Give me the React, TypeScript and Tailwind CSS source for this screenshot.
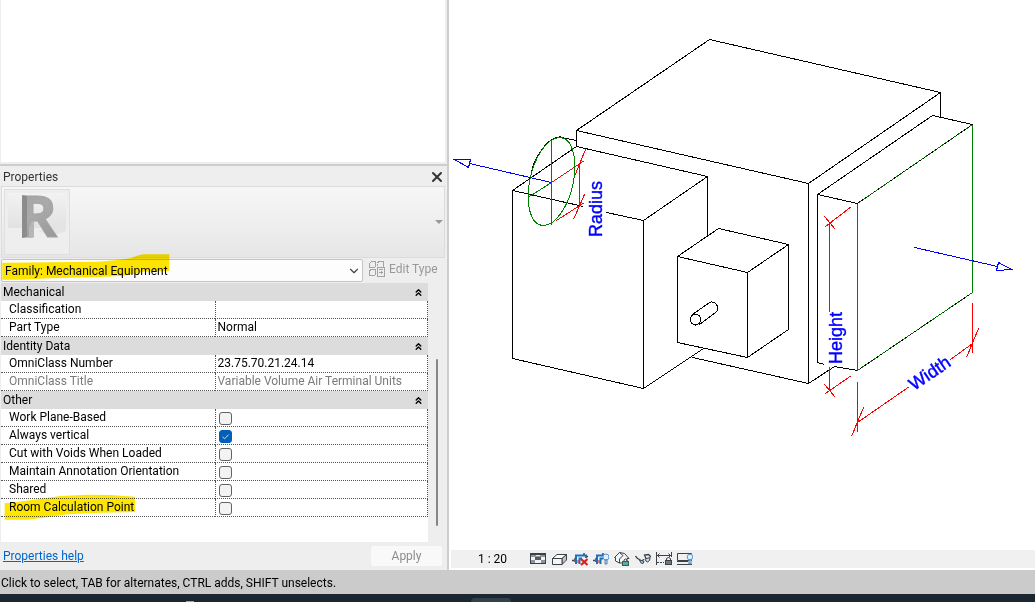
import { useState } from "react"
import { X, ChevronDown, ChevronsUp } from "lucide-react"

interface Param {
  name: string
  value?: string
  readOnly?: boolean
  checked?: boolean
  marked?: boolean
}

interface Group {
  title: string
  params: Param[]
}

const groups: Group[] = [
  {
    title: "Mechanical",
    params: [
      { name: "Classification", value: "" },
      { name: "Part Type", value: "Normal" },
    ],
  },
  {
    title: "Identity Data",
    params: [
      { name: "OmniClass Number", value: "23.75.70.21.24.14" },
      { name: "OmniClass Title", value: "Variable Volume Air Terminal Units", readOnly: true },
    ],
  },
  {
    title: "Other",
    params: [
      { name: "Work Plane-Based", checked: false },
      { name: "Always vertical", checked: true },
      { name: "Cut with Voids When Loaded", checked: false },
      { name: "Maintain Annotation Orientation", checked: false },
      { name: "Shared", checked: false },
      { name: "Room Calculation Point", checked: false, marked: true },
    ],
  },
]

function ParamCheckbox({ id, initial }: { id: string; initial: boolean }) {
  const [on, setOn] = useState(initial)
  return (
    <span className="relative block size-[13px]">
      <input
        id={id}
        type="checkbox"
        checked={on}
        onChange={(e) => setOn(e.target.checked)}
        className="block size-[13px] appearance-none rounded-[3px] border border-[#626262] bg-[#f3f3f3] checked:border-[#005fb8] checked:bg-[#005fb8]"
      />
      {on && (
        <svg viewBox="0 0 13 13" className="pointer-events-none absolute inset-0 size-[13px]" fill="none" stroke="#cfe2f4">
          <path d="M3.5 6.8 5.6 8.8 9.6 4.6" />
        </svg>
      )}
    </span>
  )
}

function ParamTable() {
  return (
    <table className="w-full table-fixed border-separate border-spacing-0 text-left">
      <colgroup>
        <col className="w-1/2" />
        <col className="w-1/2" />
      </colgroup>
      {groups.map((g) => (
        <tbody key={g.title}>
          <tr className="h-[18px] bg-[#dcdcdc]">
            <th colSpan={2} className="p-0 font-normal">
              <div className="flex h-[18px] items-center justify-between pr-1 pl-[2px]">
                {g.title}
                <button type="button" aria-label={`Collapse ${g.title}`}>
                  <ChevronsUp size={11} strokeWidth={3} />
                </button>
              </div>
            </th>
          </tr>
          {g.params.map((p) => {
            const id = p.name.toLowerCase().replace(/\s/g, "-")
            return (
              <tr key={p.name} className={p.readOnly ? "h-[18px] text-[#7a7a7a]" : "h-[18px]"}>
                <th className="border-b border-dotted border-[#555] p-0 font-normal">
                  <label htmlFor={id} className="relative block h-[17px] pl-2 leading-4 whitespace-nowrap">
                    {p.name}
                    {p.marked && <RowMarker />}
                  </label>
                </th>
                <td className="border-r border-b border-l border-dotted border-[#555] p-0">
                  {p.value === undefined ? (
                    <div className="h-[17px] pt-[3px] pl-[3px]">
                      <ParamCheckbox id={id} initial={!!p.checked} />
                    </div>
                  ) : (
                    <div className="h-[17px] pl-[2px]">
                      <input id={id} defaultValue={p.value} readOnly={p.readOnly} className="block h-4 w-full bg-transparent leading-4 outline-none" />
                    </div>
                  )}
                </td>
              </tr>
            )
          })}
        </tbody>
      ))}
    </table>
  )
}

// highlighter strokes
function RowMarker() {
  return (
    <svg viewBox="0 0 396 78" className="pointer-events-none absolute -top-[5px] left-[3px] h-[26px] w-[132px] mix-blend-multiply">
      <path d="M2 28 40 24 110 14 170 6 250 2 320 3 393 8V54L290 56 190 61 120 71 70 77H2Z" fill="#ffe600" />
    </svg>
  )
}

function FamilyMarker() {
  return (
    <svg viewBox="0 0 504 78" className="pointer-events-none absolute -top-[5px] left-px h-[26px] w-[168px] mix-blend-multiply">
      <path d="M1 26 290 23 345 18 385 13 405 5 422 1H502V51L425 53 365 65 295 69 145 73 55 77H1Z" fill="#ffe600" />
    </svg>
  )
}

function FamilyThumb() {
  return (
    <svg viewBox="0 0 66 66" className="size-[66px] overflow-visible">
      <defs>
        <linearGradient id="face" x1="0" y1="0" x2="0.4" y2="1">
          <stop offset="0" stopColor="#a0a0a0" />
          <stop offset="0.55" stopColor="#aaaaaa" />
          <stop offset="1" stopColor="#989898" />
        </linearGradient>
        <linearGradient id="floor" x1="0" y1="0" x2="0" y2="1">
          <stop offset="0" stopColor="#f2f2f2" />
          <stop offset="1" stopColor="#e2e2e2" />
        </linearGradient>
      </defs>
      <rect x="0.5" y="0.5" width="65" height="65" fill="#eeeeee" stroke="#dfdfdf" />
      <rect x="4" y="4" width="58" height="35" fill="url(#floor)" />
      <path d="M34 42 62 34V42L48 47Z" fill="#e4e4e4" />
      <text x="15" y="48" fontFamily="Open Sans, sans-serif" fontWeight="700" fontSize="58" fill="url(#face)" stroke="#a4a4a4">
        R
      </text>
      {/* extruded side */}
      <path d="M18 6 23 7V48L18 49Z" fill="#8c8c8c" />
      <path d="M25 49V38L28 32 30 33V48Z" fill="#b6b6b6" />
    </svg>
  )
}

function EditTypeIcon() {
  return (
    <svg viewBox="0 0 16 16" className="size-4" fill="none" stroke="#a3a3a3" shapeRendering="crispEdges">
      <path d="M.5 2.5 2.5.5H6.5V5.5L5.5 6.5H.5ZM8.5 2.5 9.5.5H14.5V5.5M8.5 2.5V5M.5 9.5 2.5 8.5H6.5V13.5L5.5 14.5H.5Z" />
      <path d="M8.5 6.5H15.5V15.5H8.5ZM10 8.5H14M10 11.5H14M12.5 10V13" />
    </svg>
  )
}

function PropertiesPalette() {
  return (
    <section className="flex flex-col bg-[#eeeeee]">
      <header className="flex h-5 items-center justify-between pt-px pr-[2px] pl-[3px] text-[#333]">
        <h2>Properties</h2>
        <button type="button" aria-label="Close">
          <X size={16} strokeWidth={3} />
        </button>
      </header>
      <div className="mr-[2px] ml-px flex h-[72px] items-center justify-between border border-[#dcdcdc] bg-linear-to-b from-[#f7f7f7] to-[#e6e6e6] pr-px pl-[2px]">
        <FamilyThumb />
        <button type="button" aria-label="Type selector">
          <svg viewBox="0 0 8 4" className="h-1 w-2">
            <path d="M0 0H8L4 4Z" fill="#999" />
          </svg>
        </button>
      </div>
      <div className="flex h-[25px] items-start pt-px pl-px">
        <div className="relative h-[23px] w-[362px]">
          <select
            aria-label="Family"
            className="block h-full w-full appearance-none rounded-[2px] border border-[#c4c4c4] bg-[#fdfdfd] pl-[3px]"
          >
            <option>Family: Mechanical Equipment</option>
          </select>
          <ChevronDown size={14} strokeWidth={2} className="pointer-events-none absolute top-[5px] right-[2px] text-[#444]" />
          <FamilyMarker />
        </div>
        <button type="button" disabled className="flex items-center gap-1 pt-[2px] pl-[6px] text-[#999]">
          <EditTypeIcon />
          Edit Type
        </button>
      </div>
      <div className="ml-px flex h-[259px]">
        <div className="w-[427px] bg-white">
          <ParamTable />
        </div>
        <div className="flex flex-1 justify-center pt-[76px] pr-[2px]">
          <div className="h-[167px] w-[2px] rounded bg-[#868686]" />
        </div>
      </div>
      <footer className="flex h-7 items-center justify-between pr-[5px] pl-[3px]">
        <a href="#help" className="text-[#0066cc] underline">
          Properties help
        </a>
        <button type="button" disabled className="h-5 w-[71px] rounded-[3px] bg-[#f9f9f9] text-[#8c8c8c]">
          Apply
        </button>
      </footer>
    </section>
  )
}

function FamilyModel() {
  return (
    <svg viewBox="449 0 586 550" className="h-full w-full" fill="none" shapeRendering="crispEdges">
      <g transform="translate(.5 .5)">
        {/* casing */}
        <g stroke="#000">
          <path d="M576 130 709 39 940 92 808 183ZM576 130V146L707 176M940 92V116M808 183V383L834 366 857 370M808 383 692 357" />
          <path d="M576 146 512 190V358L643 388V220L707 176V235M512 190 583 206M606 212 643 220M643 388 703 348" />
          <path d="M561 137 576 140M531 172 533 164 538 154 546 143 553 138 561 136" />
          <path d="M824 364 817 362V194L932 115 972 124 857 203 817 194M857 370 972 292" />
          <path d="M677 256 718 228 788 244 747 272ZM677 256V342L747 357V272M747 357 788 329V244" />
          <path d="M692 314 709 302C713 300 718 304 717 309Q717 311 715 312L699 324" />
          <ellipse cx="695" cy="319" rx="5" ry="5.5" />
        </g>
        {/* connectors */}
        <g stroke="#008000">
          <path d="M857 203V370M972 292V124" />
          <path d="M857 370 972 292M972 124 857 203" strokeDasharray="3 2" />
          <circle r="1" transform="matrix(22 0 -8 44 551 181)" vectorEffect="non-scaling-stroke" />
          <path d="M551 139V224M551 182 529 196" />
        </g>
        <g stroke="#f00">
          <path d="M551 182 584 160M579 163V206M585 149 574 176M584 194 573 219M556 220 584 202" />
          <path d="M829 222V311M829 366V390M824 216 835 229M825 226 851 206M824 384 835 397M825 393 851 375" />
          <path d="M857 381V431M851 436 863 407M857 422 909 386M950 359 972 343M972 302V352M966 357 978 328" />
        </g>
        <g stroke="#00f">
          <path d="M551 182 469 163M454 159 470 159 468 167ZM914 247 997 266M1011 269 998 262 996 270Z" />
        </g>
      </g>
      <g fill="#00f" fontFamily="Liberation Sans, Arial, sans-serif" fontSize="18" stroke="#00f" strokeWidth="0.4">
        <text transform="translate(602 237) rotate(-90)">Radius</text>
        <text transform="translate(842 364) rotate(-90)">Height</text>
        <text transform="translate(914 391) rotate(-34)">Width</text>
      </g>
    </svg>
  )
}

function ViewIcon({ name }: { name: string }) {
  const dark = "#3c4148"
  switch (name) {
    case "Detail Level":
      return (
        <>
          <path d="M0 1H16V12H0Z" fill={dark} />
          <path d="M1 3H15V11H1Z" fill="#8d949a" />
          <path d="M1 5H5V8H1ZM11 5H15V8H11ZM5 8H11V11H5ZM6 3H10V4H6Z" fill="#f0f3f5" />
          <path d="M5 5H11V8H5Z" fill="#555b62" />
        </>
      )
    case "Visual Style":
      return (
        <>
          <path d="M1.5 6.5 6 2.5H15.5L11 6.5Z" fill="#fff" stroke={dark} />
          <path d="M11 6.5 15.5 2.5V8L11 12.5Z" fill="#c3c7cb" stroke={dark} />
          <path d="M1.5 6.5H11V12.5H1.5Z" fill="#f3f5f6" stroke={dark} />
        </>
      )
    case "Crop View":
      return (
        <>
          <path d="M0 8.5H2M3 6V10M12 1V3M13.5 4.5H16" stroke={dark} strokeWidth="1.5" />
          <path d="M4 12V3.5H14V6M7.5 12V6.5H10" stroke="#1d6fb8" strokeWidth="2" />
          <path d="M9 7 15.5 13M15.5 7 9 13" stroke="#d8201f" strokeWidth="2.2" />
          <path d="M6 8V11" stroke="#d8201f" />
        </>
      )
    case "Show Crop Region":
      return (
        <>
          <path d="M0 8.5H2M3 6V10M10 1V3" stroke={dark} strokeWidth="1.5" />
          <path d="M4 12V3.5H11M7.5 12V6.5H10" stroke="#1d6fb8" strokeWidth="2" />
          <path d="M6 8V11" stroke="#d8201f" />
          <circle cx="13" cy="5" r="3" fill="#dff1ff" stroke="#5597d3" />
          <path d="M12 8H14V12H12Z" fill="#cfe4f5" stroke="#4e7fae" />
        </>
      )
    case "Lock 3D View":
      return (
        <>
          <path d="M0.5 5.5 5.5.5 10.5 1.5 15 6.5H13V11H5.5L1.5 9V5.5Z" fill="#f4f5f6" stroke={dark} />
          <path d="M5.5 11V7L9 3.5 5.5.5" stroke={dark} />
          <path d="M10 9V8Q11.5 6 13 8V9" stroke={dark} />
          <rect x="8.5" y="9.5" width="6" height="4" fill="#58a9a8" stroke="#33605f" />
        </>
      )
    case "Temporary Hide/Isolate":
      return (
        <>
          <path d="M.5 4Q2 7 5.5 8M6 9 9 7.5M11 6.5 9.5 3 13.5 2.5 16 5" stroke={dark} strokeWidth="1.3" />
          <path d="M4.5 8 9 9.5 8 11.5Q5.5 12 4.5 8Z" fill="#b8dcf2" stroke={dark} />
          <path d="M10 7 15 5.5Q15.5 9 12.5 10Q10.5 9.5 10 7Z" fill="#b8dcf2" stroke={dark} />
        </>
      )
    case "Reveal Constraints":
      return (
        <>
          <path d="M.5 0V13M15.5 0V5M1 3.5H15M3.5 1.5 1.5 3.5 3.5 5.5M12.5 1.5 14.5 3.5 12.5 5.5" stroke={dark} />
          <path d="M1 10.5H8" stroke={dark} strokeDasharray="2 1" />
          <path d="M10.5 8V6.5Q12.5 4.5 14.5 6.5V8" stroke={dark} />
          <rect x="9.5" y="8.5" width="6" height="4" fill="#777" stroke={dark} />
        </>
      )
    default:
      return (
        <>
          <path d="M.5 1.5H14.5V8.5H.5Z" fill="#eef0f2" stroke={dark} />
          <path d="M0 9.5H11M0 12.5H15" stroke={dark} />
          <circle cx="13" cy="5" r="2.8" fill="#dff1ff" stroke="#5597d3" />
          <path d="M12 8H14V12H12Z" fill="#cfe4f5" stroke="#4e7fae" />
        </>
      )
  }
}

const viewTools = [
  "Detail Level",
  "Visual Style",
  "Crop View",
  "Show Crop Region",
  "Lock 3D View",
  "Temporary Hide/Isolate",
  "Reveal Constraints",
  "Worksharing Display",
]

function ViewControlBar() {
  return (
    <div className="ml-[2px] flex h-[18px] items-center bg-[#f0f0f0] pl-[27px]">
      <button type="button" className="w-[52px] text-left">
        1 : 20
      </button>
      <div className="flex gap-[5px]">
        {viewTools.map((t) => (
          <button key={t} type="button" aria-label={t}>
            <svg viewBox="0 0 16 14" className="h-[14px] w-4" fill="none">
              <ViewIcon name={t} />
            </svg>
          </button>
        ))}
      </div>
    </div>
  )
}

export default function App() {
  return (
    <div className="flex h-screen flex-col overflow-hidden bg-white font-[Roboto,'Open_Sans',sans-serif] text-xs text-black">
      <main className="flex min-h-0 flex-1">
        <aside className="flex w-[449px] shrink-0 flex-col border-r-2 border-[#cdcdcd] bg-[#eeeeee]">
          <div className="mr-[2px] mb-[2px] ml-px min-h-0 flex-1 bg-white" />
          <div className="h-[2px] bg-[#cdcdcd]" />
          <PropertiesPalette />
        </aside>
        <section className="flex min-w-0 flex-1 flex-col bg-white pb-[2px]">
          <div className="min-h-0 flex-1">
            <FamilyModel />
          </div>
          <ViewControlBar />
        </section>
      </main>
      <footer className="flex h-6 items-center bg-[#cbcbcb] pt-px pl-px">
        Click to select, TAB for alternates, CTRL adds, SHIFT unselects.
      </footer>
      <div className="flex h-2 items-end bg-[#1b2630] pl-[186px]">
        <div className="h-px w-2 bg-[#c98b92]" />
        <div className="ml-[277px] h-1 w-10 rounded-t bg-[#33404a]" />
      </div>
    </div>
  )
}
